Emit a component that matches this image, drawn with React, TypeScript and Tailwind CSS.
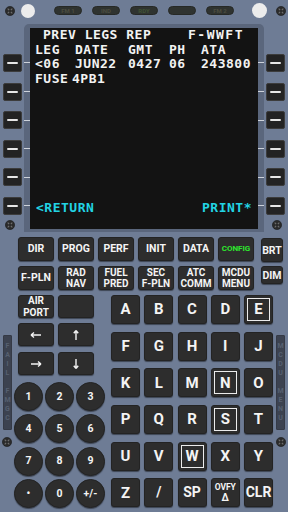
const mono = "font-['DejaVu_Sans_Mono',monospace]";
const sans = "font-['Roboto','Liberation_Sans',sans-serif]";

const KEY =
  "bg-[#2d2d2d] border border-[#232323] rounded-[3px] shadow-[0_1px_1px_rgba(0,0,0,0.45)] flex items-center justify-center font-bold";

function Screw() {
  return (
    <svg width="10" height="10" viewBox="0 0 10 10">
      <circle cx="5" cy="5" r="4.6" fill="#2b2b2b" stroke="#1b1b1b" strokeWidth="0.6" />
      <path d="M2.7 2.7 L7.3 7.3 M7.3 2.7 L2.7 7.3" stroke="#707070" strokeWidth="1.1" />
      <circle cx="5" cy="5" r="1.2" fill="#2b2b2b" />
    </svg>
  );
}

function Lsk() {
  return (
    <div className="w-[19px] h-[18px] bg-[#232323] border border-[#3c3c3c] rounded-[2px] flex items-center justify-center">
      <div className="w-[11px] h-[2px] bg-[#e6e6e6] rounded-full" />
    </div>
  );
}

function LskColumn({ right }: { right?: boolean }) {
  return (
    <div className="w-[24px] flex flex-col pt-[24.7px]">
      {[0, 1, 2, 3, 4, 5].map((i) => (
        <div key={i} className={`h-[28.6px] flex items-center ${right ? "pl-[2px]" : "pl-[3px]"}`}>
          <Lsk />
        </div>
      ))}
      <div className={`h-[10px] flex ${right ? "pl-[8px]" : "pl-[5px]"}`}>
        <Screw />
      </div>
    </div>
  );
}

function Ticks() {
  return (
    <div className="w-[6px] flex flex-col pt-[20.7px]">
      {[0, 1, 2, 3, 4, 5].map((i) => (
        <div key={i} className="h-[28.6px] flex items-center">
          <div className="w-full h-px bg-[#cdd2da]" />
        </div>
      ))}
    </div>
  );
}

function Pill({ label, color }: { label: string; color: string }) {
  return (
    <div
      className={`w-[28px] h-[9px] rounded-full bg-[#2f3330] border border-[#262926] flex items-center justify-center text-[6px] font-bold leading-none ${sans} ${color}`}
    >
      {label}
    </div>
  );
}

function Line({ children, className = "" }: { children?: React.ReactNode; className?: string }) {
  return <div className={`h-[14.36px] flex items-center whitespace-pre ${className}`}>{children}</div>;
}

function Cols({ items }: { items: string[] }) {
  const widths = ["w-[40px]", "w-[53px]", "w-[41px]", "w-[32px]", ""];
  return (
    <Line className="pl-[5px]">
      {items.map((t, i) => (
        <span key={i} className={widths[i]}>
          {t}
        </span>
      ))}
    </Line>
  );
}

function Arrow({ dir }: { dir: "l" | "r" | "u" | "d" }) {
  const paths: Record<string, string> = {
    l: "M1 5 H11 M1 5 L4 2.5 M1 5 L4 7.5",
    r: "M1 5 H11 M11 5 L8 2.5 M11 5 L8 7.5",
    u: "M6 0.5 V10 M6 0.5 L3.8 3.3 M6 0.5 L8.2 3.3",
    d: "M6 0 V9.5 M6 9.5 L3.8 6.7 M6 9.5 L8.2 6.7",
  };
  return (
    <svg width="12" height="10" viewBox="0 0 12 10">
      <path d={paths[dir]} stroke="#f2f2f2" strokeWidth="1.4" fill="none" />
    </svg>
  );
}

function TwoLine({ a, b }: { a: string; b: string }) {
  return (
    <div className="flex flex-col items-center text-[10px] leading-[11.5px]">
      <span>{a}</span>
      <span>{b}</span>
    </div>
  );
}

function Strip({ words }: { words: string[] }) {
  return (
    <div className={`w-[9px] h-[95px] bg-[#3c4250] border border-[#353a46] rounded-[1px] flex flex-col items-center pt-[6px] gap-[9px] ${sans}`}>
      {words.map((w) => (
        <div key={w} className="flex flex-col items-center text-[7px] leading-[9px] font-bold text-[#566070]">
          {w.split("").map((c, i) => (
            <span key={i}>{c}</span>
          ))}
        </div>
      ))}
    </div>
  );
}

export default function App() {
  const fnRow1 = ["DIR", "PROG", "PERF", "INIT", "DATA"];
  const fnRow2: [string, string][] = [
    ["RAD", "NAV"],
    ["FUEL", "PRED"],
    ["SEC", "F-PLN"],
    ["ATC", "COMM"],
    ["MCDU", "MENU"],
  ];
  const letters = "ABCDEFGHIJKLMNOPQRSTUVWXY".split("");
  const marked = ["E", "N", "S", "W"];
  const W = "text-[#f4f4f4]";

  return (
    <div className={`w-[288px] h-[512px] bg-[#6e7c95] overflow-hidden flex flex-col ${sans}`}>
      {/* top annunciators */}
      <div className="h-[24px] pb-[3px] flex items-center">
        <div className="ml-[5px] flex">
          <Screw />
        </div>
        <div className="ml-[6px] w-[14px] h-[14px] rounded-full bg-[#ececec]" />
        <div className="ml-[19px] flex gap-[10px]">
          <Pill label="FM 1" color="text-[#4b4d40]" />
          <Pill label="IND" color="text-[#4b4d40]" />
          <Pill label="RDY" color="text-[#3f5235]" />
          <Pill label="" color="" />
          <Pill label="FM 2" color="text-[#4b4d40]" />
        </div>
        <div className="ml-[18px] w-[15px] h-[15px] rounded-full bg-[#ececec]" />
        <div className="ml-[9px] flex">
          <Screw />
        </div>
      </div>

      {/* screen area */}
      <div className="h-[208px] flex">
        <LskColumn />
        <div className="w-[240px] h-[208px] bg-[#5a667c] rounded-t-[5px] pt-[4px] flex">
          <Ticks />
          <div className={`w-[228px] h-[201px] bg-[#131313] flex flex-col text-[13px] font-bold tracking-[0.5px] text-[#f2f2f2] ${mono}`}>
            <Line className="pl-[13px] pr-[14px] justify-between">
              <span>PREV LEGS REP</span>
              <span className="tracking-[1.5px]">F-WWFT</span>
            </Line>
            <Cols items={["LEG", "DATE", "GMT", "PH", "ATA"]} />
            <Cols items={["<06", "JUN22", "0427", "06", "243800"]} />
            <Line className="pl-[5px]">
              <span className="w-[37px]">FUSE</span>
              <span>4PB1</span>
            </Line>
            <Line />
            <Line />
            <Line />
            <Line />
            <Line />
            <Line />
            <Line />
            <Line />
            <Line className="pl-[6px] pr-[6px] justify-between text-[#22d4e4]">
              <span>{"<RETURN"}</span>
              <span>PRINT*</span>
            </Line>
            <Line />
          </div>
          <Ticks />
        </div>
        <LskColumn right />
      </div>

      {/* function keys */}
      <div className="mt-[5px] flex">
        <div className="ml-[18px] grid grid-cols-6 gap-x-[4px] gap-y-[5px] text-[10.5px]">
          {fnRow1.map((k) => (
            <div key={k} className={`${KEY} ${W} w-[36px] h-[24px]`}>
              {k}
            </div>
          ))}
          <div className={`${KEY} w-[36px] h-[24px] text-[8px] text-[#2ee82e]`}>CONFIG</div>
          <div className={`${KEY} ${W} w-[36px] h-[24px]`}>F-PLN</div>
          {fnRow2.map(([a, b]) => (
            <div key={a} className={`${KEY} ${W} w-[36px] h-[24px]`}>
              <TwoLine a={a} b={b} />
            </div>
          ))}
        </div>
        <div className={`ml-[7px] flex flex-col gap-[4px] text-[10.5px] ${W}`}>
          <div className={`${KEY} w-[22px] h-[24px] mt-[1px] items-end pb-[2px]`}>BRT</div>
          <div className={`${KEY} w-[22px] h-[18px] items-start pt-[1px]`}>DIM</div>
        </div>
      </div>

      {/* lower keypad */}
      <div className={`mt-[5px] flex ${W}`}>
        <div className="w-[14px] flex flex-col items-start">
          <div className="mt-[40px] ml-[3px]">
            <Strip words={["FAIL", "FMGC"]} />
          </div>
          <div className="mt-[7px] ml-[2px] flex">
            <Screw />
          </div>
        </div>

        <div className="w-[97px] flex flex-col">
          <div className="ml-[4px] flex gap-[4px]">
            <div className={`${KEY} w-[36px] h-[23px]`}>
              <TwoLine a="AIR" b="PORT" />
            </div>
            <div className={`${KEY} w-[36px] h-[23px]`} />
          </div>
          <div className="mt-[5px] ml-[4px] flex gap-[4px]">
            <div className={`${KEY} w-[36px] h-[23px]`}>
              <Arrow dir="l" />
            </div>
            <div className={`${KEY} w-[36px] h-[23px]`}>
              <Arrow dir="u" />
            </div>
          </div>
          <div className="mt-[6px] ml-[4px] flex gap-[4px]">
            <div className={`${KEY} w-[36px] h-[23px]`}>
              <Arrow dir="r" />
            </div>
            <div className={`${KEY} w-[36px] h-[23px]`}>
              <Arrow dir="d" />
            </div>
          </div>
          <div className="mt-[7px] grid grid-cols-3 gap-x-[2px] gap-y-[3.3px] w-[91px] text-[10.5px]">
            {["1", "2", "3", "4", "5", "6", "7", "8", "9", "•", "0", "+/-"].map((n) => (
              <div
                key={n}
                className="w-[29px] h-[29px] rounded-full bg-[#2d2d2d] border border-[#232323] shadow-[0_1px_1px_rgba(0,0,0,0.45)] flex items-center justify-center font-bold"
              >
                {n}
              </div>
            ))}
          </div>
        </div>

        <div className="grid grid-cols-5 gap-x-[4.25px] gap-y-[7.2px] text-[15px]">
          {letters.map((l) => (
            <div key={l} className={`${KEY} w-[29px] h-[29px]`}>
              {marked.includes(l) ? (
                <div className="w-[23px] h-[23px] border-[1.5px] border-[#ececec] flex items-center justify-center">
                  {l}
                </div>
              ) : (
                l
              )}
            </div>
          ))}
          <div className={`${KEY} w-[29px] h-[29px]`}>Z</div>
          <div className={`${KEY} w-[29px] h-[29px] text-[14px]`}>/</div>
          <div className={`${KEY} w-[29px] h-[29px] text-[14px]`}>SP</div>
          <div className={`${KEY} w-[29px] h-[29px]`}>
            <div className="flex flex-col items-center">
              <span className="text-[8.5px] leading-[10px]">OVFY</span>
              <span className="text-[10px] leading-[11px]">Δ</span>
            </div>
          </div>
          <div className={`${KEY} w-[29px] h-[29px] text-[14px]`}>CLR</div>
        </div>

        <div className="pl-[3px] flex flex-col items-start">
          <div className="mt-[40px]">
            <Strip words={["MCDU", "MENU"]} />
          </div>
          <div className="mt-[7px] flex">
            <Screw />
          </div>
        </div>
      </div>
    </div>
  );
}
